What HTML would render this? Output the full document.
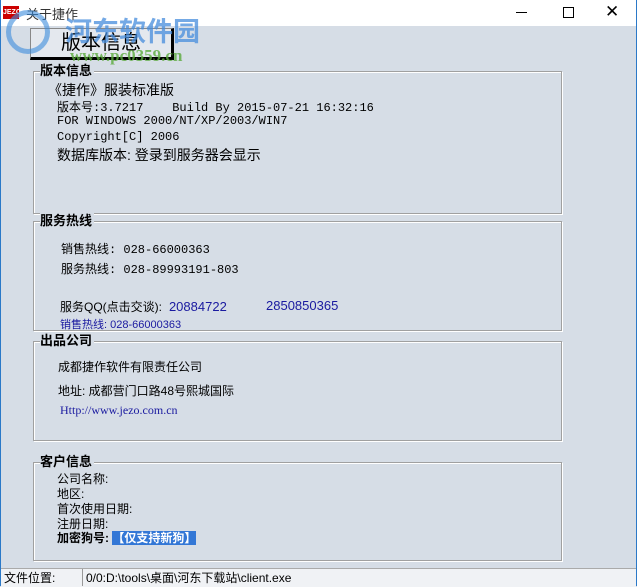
<!DOCTYPE html>
<html><head><meta charset="utf-8"><style>
body{margin:0;width:637px;height:587px;overflow:hidden;background:#d6dde6;font-family:"Liberation Sans","Noto Sans CJK SC",sans-serif;position:relative}
.a{position:absolute;white-space:nowrap}
.tb{left:0;top:0;width:637px;height:26px;background:#fff}
.win{left:0;top:0;width:635px;height:585px;border:1px solid #2b79c8;border-top:none}
.g{position:absolute;border:1px solid #a0a0a0;box-shadow:inset 1px 1px 0 #fff,1px 1px 0 #fff}
.gt{position:absolute;top:-9px;left:6px;background:#d6dde6;font-weight:bold;font-size:13px;line-height:16px;color:#000;padding-right:2px}
.t{font-size:13px;color:#000}
.m{font-family:"Liberation Mono","Noto Sans CJK SC",monospace;font-size:12px}
.b{color:#1a1aa0}
</style></head><body>
<div class="a tb"></div>
<div class="a win"></div>
<div class="a" style="left:3px;top:6px;width:16px;height:13px;background:#c00;color:#fff;font-size:7px;font-weight:bold;line-height:13px;text-align:center">JEZO</div>
<div class="a t" style="left:26px;top:4px;color:#333">关于捷作</div>
<div class="a" style="left:516px;top:12px;width:11px;height:1px;background:#000"></div>
<div class="a" style="left:563px;top:7px;width:9px;height:9px;border:1px solid #000"></div>
<div class="a" style="left:605px;top:2px;font-size:17px;color:#000">✕</div>
<div class="a" style="left:30px;top:28px;width:140px;height:28px;background:#e4e8ee;border:1px solid #888;border-right:3px solid #000;border-bottom:3px solid #000;font-size:20px;line-height:28px;text-align:center">版本信息</div>
<div class="a" style="left:6px;top:10px;width:44px;height:44px;border-radius:50%;border:5px solid rgba(60,140,220,.6);box-sizing:border-box"></div>
<div class="a" style="left:65px;top:10px;font-size:27px;font-weight:bold;color:rgba(70,140,220,.75)">河东软件园</div>
<div class="a" style="left:70px;top:46px;font-size:17px;font-weight:bold;color:rgba(90,170,60,.8);font-family:'Liberation Serif',serif">www.pc0359.cn</div>

<div class="g" style="left:33px;top:71px;width:527px;height:141px"><div class="gt">版本信息</div></div>
<div class="a t" style="left:48px;top:80px;font-size:14px">《捷作》服装标准版</div>
<div class="a m" style="left:57px;top:98px">版本号:3.7217&nbsp;&nbsp;&nbsp;&nbsp;Build By 2015-07-21 16:32:16</div>
<div class="a m" style="left:57px;top:114px">FOR WINDOWS 2000/NT/XP/2003/WIN7</div>
<div class="a m" style="left:57px;top:130px">Copyright[C] 2006</div>
<div class="a t" style="left:57px;top:145px;font-size:14px">数据库版本: 登录到服务器会显示</div>

<div class="g" style="left:33px;top:221px;width:527px;height:108px"><div class="gt">服务热线</div></div>
<div class="a m" style="left:61px;top:240px">销售热线: 028-66000363</div>
<div class="a m" style="left:61px;top:260px">服务热线: 028-89993191-803</div>
<div class="a t" style="left:60px;top:298px;font-size:12px">服务QQ(点击交谈): <span class="b" style="font-size:13px">&nbsp;20884722</span></div>
<div class="a b" style="left:266px;top:298px;font-size:13px">2850850365</div>
<div class="a b" style="left:60px;top:316px;font-size:11px">销售热线: 028-66000363</div>

<div class="g" style="left:33px;top:341px;width:527px;height:98px"><div class="gt">出品公司</div></div>
<div class="a t" style="left:58px;top:358px;font-size:12px">成都捷作软件有限责任公司</div>
<div class="a t" style="left:58px;top:382px;font-size:12px">地址: 成都营门口路48号熙城国际</div>
<div class="a b" style="left:60px;top:403px;font-size:12px;font-family:'Liberation Serif',serif">Http://www.jezo.com.cn</div>

<div class="g" style="left:33px;top:462px;width:527px;height:97px"><div class="gt">客户信息</div></div>
<div class="a t" style="left:57px;top:470px;font-size:12px">公司名称:</div>
<div class="a t" style="left:57px;top:485px;font-size:12px">地区:</div>
<div class="a t" style="left:57px;top:500px;font-size:12px">首次使用日期:</div>
<div class="a t" style="left:57px;top:515px;font-size:12px">注册日期:</div>
<div class="a t" style="left:57px;top:529px;font-size:12px;font-weight:bold">加密狗号: <span style="background:#3377d6;color:#fff">【仅支持新狗】</span></div>

<div class="a" style="left:1px;top:568px;width:635px;height:18px;background:#f0f2f5;border-top:1px solid #aaa"></div>
<div class="a" style="left:82px;top:569px;width:1px;height:17px;background:#999"></div>
<div class="a t" style="left:4px;top:569px;font-size:12px">文件位置:</div>
<div class="a t" style="left:86px;top:569px;font-size:12px">0/0:D:\tools\桌面\河东下载站\client.exe</div>
</body></html>
